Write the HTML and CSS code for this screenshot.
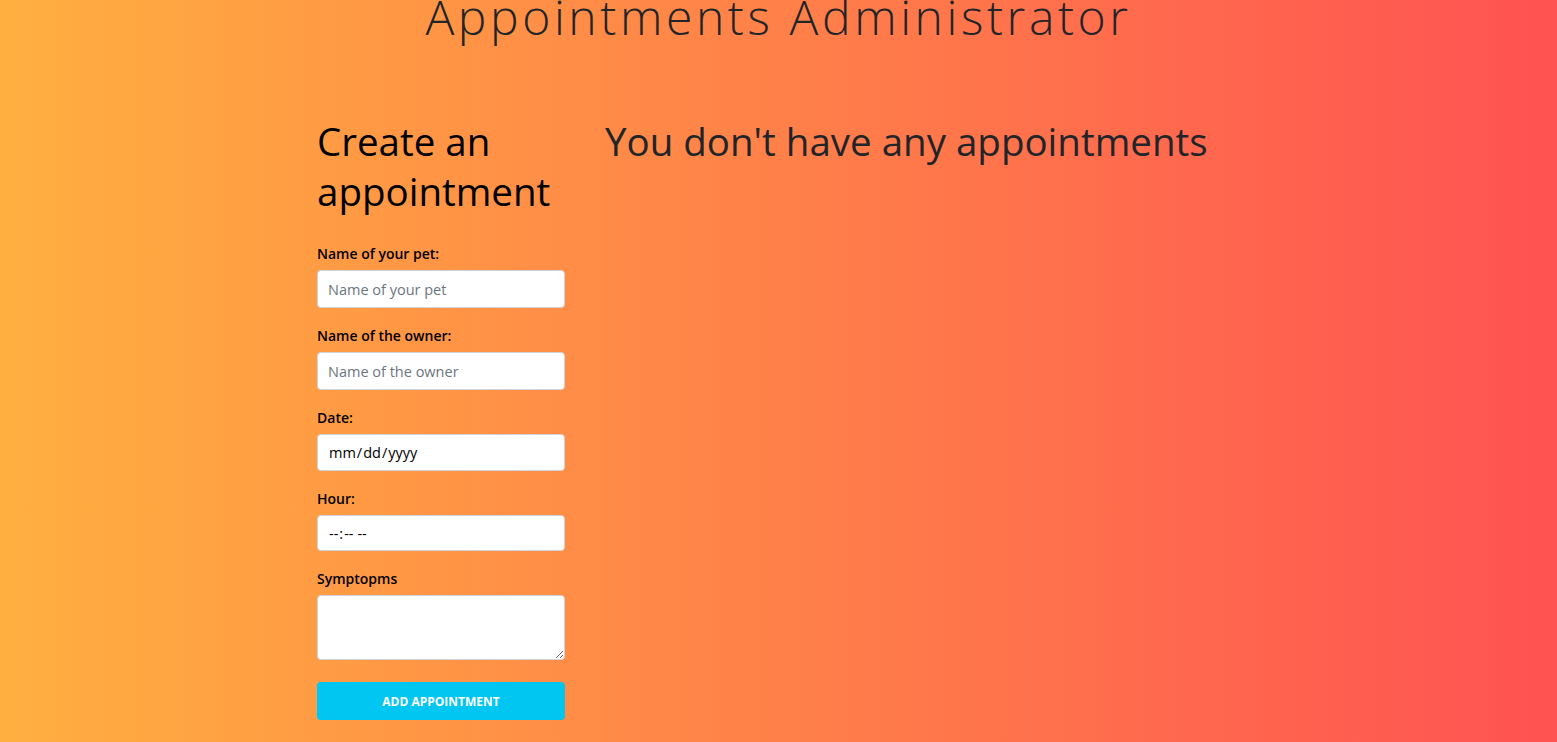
FILE: index.html
```html
<!DOCTYPE html>
<html lang="en">
<head>
<meta charset="utf-8">
<title>Appointments Administrator</title>
<link rel="stylesheet" href="styles.css">
</head>
<body>
  <h1 class="title">Appointments Administrator</h1>
  <main class="container">
    <section class="form-col">
      <h2 class="section-title">Create an appointment</h2>
      <form class="form">
        <div class="form-group">
          <label class="label" for="pet">Name of your pet:</label>
          <input class="control" id="pet" type="text" placeholder="Name of your pet">
        </div>
        <div class="form-group">
          <label class="label" for="owner">Name of the owner:</label>
          <input class="control" id="owner" type="text" placeholder="Name of the owner">
        </div>
        <div class="form-group">
          <label class="label" for="date">Date:</label>
          <input class="control control-date" id="date" type="date">
        </div>
        <div class="form-group">
          <label class="label" for="hour">Hour:</label>
          <input class="control control-time" id="hour" type="time">
        </div>
        <div class="form-group">
          <label class="label" for="symptoms">Symptopms</label>
          <textarea class="control control-area" id="symptoms"></textarea>
        </div>
        <button class="btn" type="button">Add appointment</button>
      </form>
    </section>
    <section class="list-col">
      <h2 class="section-title list-title">You don't have any appointments</h2>
    </section>
  </main>
</body>
</html>
```
FILE: styles.css
```css
* { box-sizing: border-box; }
html, body { height: 100%; }
body {
  margin: 0;
  background: linear-gradient(to right, #ffaf40, #ff5252);
  font-family: "Open Sans", "Noto Sans", sans-serif;
  color: #212529;
  overflow: hidden;
}
.title {
  margin: 0;
  font-size: 48px;
  font-weight: 300;
  line-height: 34px;
  letter-spacing: 3.6px;
  text-align: center;
  color: #212529;
}
.container {
  max-width: 923px;
  margin: 0 auto;
  padding-top: 82px;
  display: flex;
  gap: 40px;
}
.form-col { width: 248px; flex: none; }
.list-col { flex: 1; }
.section-title {
  margin: 0 0 28px;
  font-size: 38.5px;
  font-weight: 400;
  line-height: 50px;
  color: #000;
}
.list-title { color: #212529; }
.form { display: flex; flex-direction: column; }
.form-group {
  display: flex;
  flex-direction: column;
  margin-bottom: 18px;
}
.label {
  font-size: 14px;
  font-weight: 600;
  line-height: 20px;
  margin-bottom: 6px;
  color: #000;
}
.control {
  width: 100%;
  height: 38px;
  padding: 6px 10px;
  font-family: inherit;
  font-size: 14.5px;
  color: #000;
  background: #fff;
  border: 1px solid #ced4da;
  border-radius: 4px;
  outline: none;
}
.control::placeholder { color: #6c757d; }
.control-date { height: 37px; }
.control-time { height: 36px; }
.control-date::-webkit-calendar-picker-indicator,
.control-time::-webkit-calendar-picker-indicator { display: none; }
.control-area { height: 65px; resize: vertical; }
.btn {
  margin-top: 4px;
  height: 38px;
  width: 100%;
  border: none;
  border-radius: 4px;
  background: #00c6f1;
  color: #fff;
  font-family: inherit;
  font-size: 12px;
  font-weight: 700;
  text-transform: uppercase;
  letter-spacing: 0;
}
```
